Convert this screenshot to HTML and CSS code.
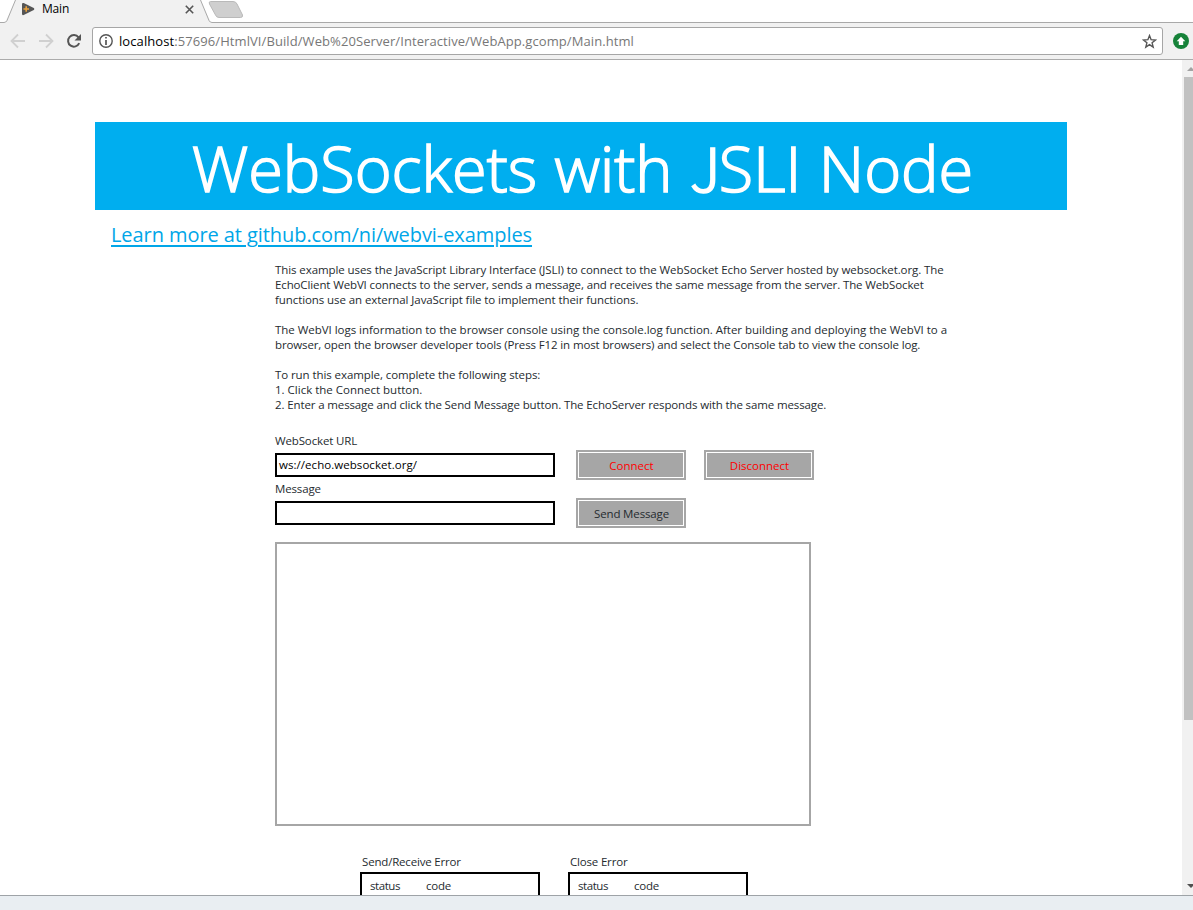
FILE: index.html
```html
<!DOCTYPE html>
<html lang="en">
<head>
<meta charset="utf-8">
<title>Main</title>
<link rel="stylesheet" href="styles.css">
</head>
<body>
<div class="browser">
  <header class="tabstrip">
    <svg class="tab-shapes" width="1193" height="23" viewBox="0 0 1193 23">
      <path d="M5 23 L15.500 0 H200.500 L211 23 Z" fill="#f1f1f1"/>
      <path d="M0 22.500 H4 Q6 22.500 7 20.500 L15.500 0 M200.500 0 L209 20.500 Q210 22.500 212 22.500 H1193" fill="none" stroke="#a9a9a9"/>
      <path d="M210.500 1.500 H233 Q236 1.500 237 4 L242.500 15 Q243 17.500 240.500 17.500 H219 Q216.500 17.500 215.500 15 L209.500 4 Q208.500 1.500 210.500 1.500Z" fill="#cfcfcf" stroke="#b9b9b9"/>
    </svg>
    <div class="tab">
      <svg class="favicon" width="15" height="14" viewBox="0 0 15 14"><path d="M1 2.200 Q1 .5 2.700 1 L12.800 6 Q14 7 12.800 8 L2.700 13 Q1 13.500 1 12Z" fill="#555"/><path d="M2.500 7 H8 M5.200 4.300 V9.700" stroke="#e9a13b" stroke-width="1.600"/></svg>
      <span class="tab-title">Main</span>
      <svg class="tab-close" width="9" height="9" viewBox="0 0 9 9"><path d="M.8.800 L8.200 8.200 M8.200.800 L.8 8.200" stroke="#555" stroke-width="1.600"/></svg>
    </div>
  </header>
  <nav class="toolbar">
    <svg class="nav-icons" width="92" height="36" viewBox="0 0 92 36">
      <g fill="none" stroke="#d0d0d0" stroke-width="1.800"><path d="M25 18 H12 M18 11.500 L11.500 18 L18 24.500"/><path d="M39 18 H52 M46 11.500 L52.500 18 L46 24.500"/></g>
      <path d="M79.200 20.200 A5.800 5.800 0 1 1 78.500 14.300" fill="none" stroke="#555" stroke-width="2"/>
      <path d="M81 11 V17.500 H74.500Z" fill="#555"/>
    </svg>
    <div class="omnibox">
      <svg width="14" height="14" viewBox="0 0 14 14"><circle cx="7" cy="7" r="6.200" fill="none" stroke="#555" stroke-width="1.400"/><path d="M7 3 V4.600 M7 6 V11" stroke="#555" stroke-width="1.700"/></svg>
      <span class="url"><b>localhost</b>:57696/HtmlVI/Build/Web%20Server/Interactive/WebApp.gcomp/Main.html</span>
      <svg width="15" height="15" viewBox="0 0 15 15"><path d="M7.500 1.600 L9.100 5.700 L13.500 6 L10.100 8.800 L11.200 13.100 L7.500 10.700 L3.800 13.100 L4.900 8.800 L1.500 6 L5.900 5.700Z" fill="none" stroke="#555" stroke-width="1.400"/></svg>
    </div>
    <svg class="extension" width="16" height="16" viewBox="0 0 16 16"><circle cx="8" cy="8" r="8" fill="#168239"/><path d="M8 3.700 L12.300 8.200 H10.200 V12 H5.800 V8.200 H3.700Z" fill="#fff"/></svg>
  </nav>
  <div class="viewport">
    <main class="page">
      <h1 class="banner">WebSockets with <span class="initial">J</span>SLI Node</h1>
      <a class="learn-more">Learn more at github.com/ni/webvi-examples</a>
      <div class="content">
        <div class="description">
          <p><span class="tight-2">This example uses the JavaScript Library Interface (JSLI) to connect to the WebSocket Echo Server hosted by websocket.org. The</span><br><span class="tight-3">EchoClient WebVI connects to the server, sends a message, and receives the same message from the server. The WebSocket</span><br><span class="tight-2">functions use an external JavaScript file to implement their functions.</span></p>
          <p><span class="tight-1">The WebVI logs information to the browser console using the console.log function. After building and deploying the WebVI to a</span><br><span class="tight-3">browser, open the browser developer tools (Press F12 in most browsers) and select the Console tab to view the console log.</span></p>
          <p><span class="tight-2">To run this example, complete the following steps:</span><br><span>1. Click the Connect button.</span><br><span class="tight-3">2. Enter a message and click the Send Message button. The EchoServer responds with the same message.</span></p>
        </div>
        <div class="form">
          <div class="field"><label>WebSocket URL</label><div class="input">ws://echo.websocket.org/</div></div>
          <div class="button red">Connect</div>
          <div class="button red">Disconnect</div>
          <div class="field"><label>Message</label><div class="input"></div></div>
          <div class="button send">Send Message</div>
        </div>
        <div class="log"></div>
        <div class="errors">
          <section><h2>Send/Receive Error</h2><div class="cluster"><span class="status">status</span><span>code</span></div></section>
          <section><h2>Close Error</h2><div class="cluster"><span class="status">status</span><span>code</span></div></section>
        </div>
      </div>
    </main>
    <div class="scrollbar">
      <svg width="11" height="17" viewBox="0 0 11 17"><path d="M5 11 L9 7 L13 11Z" fill="#a3a3a3"/></svg>
      <div class="thumb"></div>
      <svg width="11" height="17" viewBox="0 0 11 17"><path d="M5 6 L9 10 L13 6Z" fill="#505050"/></svg>
    </div>
  </div>
  <footer class="bottom"></footer>
</div>
</body>
</html>
```
FILE: styles.css
```css
* { box-sizing: border-box; }
body { margin: 0; overflow: hidden; font: 11.5px/15px "Open Sans", "Noto Sans", sans-serif; color: #252b2f; background: #fff; }
h1, h2, p { margin: 0; font-weight: 400; }

.browser { display: flex; flex-direction: column; width: 1193px; height: 910px; }
.tabstrip { display: grid; height: 23px; flex: none; }
.tab-shapes, .tab { grid-area: 1 / 1; display: block; }
.tab { z-index: 1; display: flex; align-items: center; height: 18px; width: 193.5px; padding-left: 21px; }
.tab-title { flex: 1; margin-left: 6px; padding-bottom: 1px; color: #000; font-size: 12px; letter-spacing: -.2px; }
.toolbar { display: flex; align-items: center; height: 37px; flex: none; background: #f1f1f1; border-bottom: 1px solid #ababab; }
.omnibox { display: flex; align-items: center; width: 1071px; height: 28px; padding: 0 5.5px 0 6px; background: #fff; border: 1px solid #a6a6a6; border-radius: 3px; }
.url { flex: 1; margin-left: 6px; font-size: 13px; letter-spacing: .084px; color: #777; white-space: nowrap; }
.url b { font-weight: 400; color: #000; }
.extension { margin-left: 10px; flex: none; }

.viewport { display: flex; flex: 1; min-height: 0; }
.page { width: 1182px; padding: 62px 0 0 95px; overflow: hidden; }
.banner { width: 972px; height: 88px; padding-left: 97px; background: #00aeef; color: #fff; font-size: 63px; font-weight: 300; line-height: 91px; word-spacing: 1px; white-space: nowrap; -webkit-text-stroke: 1.6px #fff; }
.initial { display: inline-block; width: 29px; font-family: "Noto Sans CJK SC", sans-serif; font-size: 60px; letter-spacing: -3px; line-height: 60px; }
.learn-more { display: block; width: max-content; margin-left: 16px; padding-top: 10px; color: #00a6e8; font-size: 20px; line-height: 30px; letter-spacing: -.071px; text-decoration: underline; text-decoration-thickness: 2px; text-underline-offset: 3px; }

.content { margin-left: 180px; padding-top: 12px; }
.description { display: flex; flex-direction: column; gap: 15px; white-space: nowrap; }
.tight-1 { letter-spacing: -.028px; }
.tight-2 { letter-spacing: -.08px; }
.tight-3 { letter-spacing: -.124px; }

.form { display: grid; grid-template: 51px 48px / 280px 110px 110px; column-gap: 18px; align-items: end; margin-top: 16px; }
.field { height: 48px; padding-top: 2px; }
.field label { display: block; height: 20px; letter-spacing: -.14px; }
.input { height: 24px; padding: 2px; border: 2px solid #000; line-height: 16px; letter-spacing: .049px; color: #000; }
.button { position: relative; left: 3px; height: 30px; margin-bottom: -1px; padding-left: 1px; border: 2px solid #a6a6a6; outline: 1px solid #fff; outline-offset: -3px; background: #a6a6a6; line-height: 27px; text-align: center; }
.send { letter-spacing: -.14px; }
.red { color: #f00; }
.log { width: 536px; height: 284px; margin-top: 15px; border: 2px solid #a6a6a6; }
.errors { display: flex; gap: 28px; margin: 28px 0 0 85px; }
.errors h2 { height: 18px; padding-left: 2px; font-size: 11.5px; line-height: 15px; letter-spacing: -.18px; }
.errors section { width: 180px; }
.cluster { display: flex; height: 120px; padding: 4px 8px; border: 2px solid #000; letter-spacing: -.23px; }
.status { width: 56px; letter-spacing: -.43px; }

.scrollbar { display: flex; flex-direction: column; width: 11px; background: #f1f1f1; }
.scrollbar svg:last-child { margin-top: auto; }
.thumb { height: 643px; margin-left: 2px; background: #c1c1c1; }
.bottom { height: 15px; flex: none; background: #e9eef2; border-top: 1px solid #9ea3a7; }
```
